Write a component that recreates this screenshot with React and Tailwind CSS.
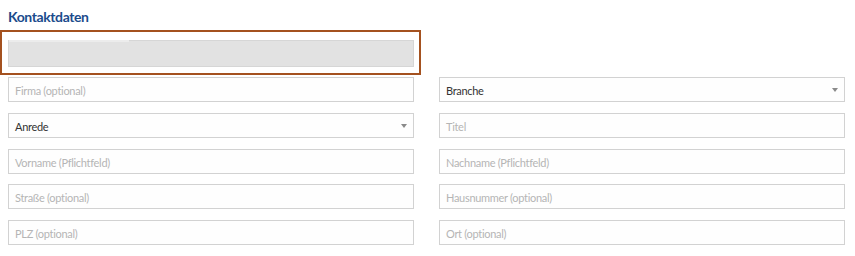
import React from 'react';

const felder = [
  { label: 'Firma (optional)' },
  { label: 'Branche', select: true },
  { label: 'Anrede', select: true },
  { label: 'Titel' },
  { label: 'Vorname (Pflichtfeld)' },
  { label: 'Nachname (Pflichtfeld)' },
  { label: 'Straße (optional)' },
  { label: 'Hausnummer (optional)' },
  { label: 'PLZ (optional)' },
  { label: 'Ort (optional)' },
];

function Feld({ label, select }) {
  return (
    <div className="relative h-[25px] border border-[#d2d2d2] bg-[#fefefe] flex items-center pl-[6px] pt-[2px]">
      <span className={select ? 'text-[#333333]' : 'text-[#b5b5b5]'}>{label}</span>
      {select && (
        <span className="absolute right-[6px] top-[10px] w-0 h-0 border-l-[3px] border-r-[3px] border-t-[4px] border-l-transparent border-r-transparent border-t-[#8a8a8a]" />
      )}
    </div>
  );
}

export default function App() {
  return (
    <div
      className="w-[855px] h-[256px] bg-white text-[11px] leading-none tracking-[-0.3px]"
      style={{ fontFamily: 'Lato, "Open Sans", sans-serif' }}
    >
      <h2 className="pt-[10px] pl-[8px] text-[14px] leading-[14px] font-bold text-[#1b4b8c] tracking-[-0.4px]">
        Kontaktdaten
      </h2>

      <div className="mt-[6px] w-[421px] h-[45px] border-2 border-[#a4511f] pt-[8px] pl-[6px] pr-[5px]">
        <div className="relative h-[27px] bg-[#e2e2e2] border border-[#d6d6d6]">
          <div className="absolute left-0 top-[-1px] w-[120px] h-[2px] bg-[#ececec]" />
        </div>
      </div>

      <div className="mt-[2px] pl-[8px] w-[845px] grid grid-cols-2 gap-x-[25px] gap-y-[10.75px]">
        {felder.map((f) => (
          <Feld key={f.label} {...f} />
        ))}
      </div>
    </div>
  );
}
